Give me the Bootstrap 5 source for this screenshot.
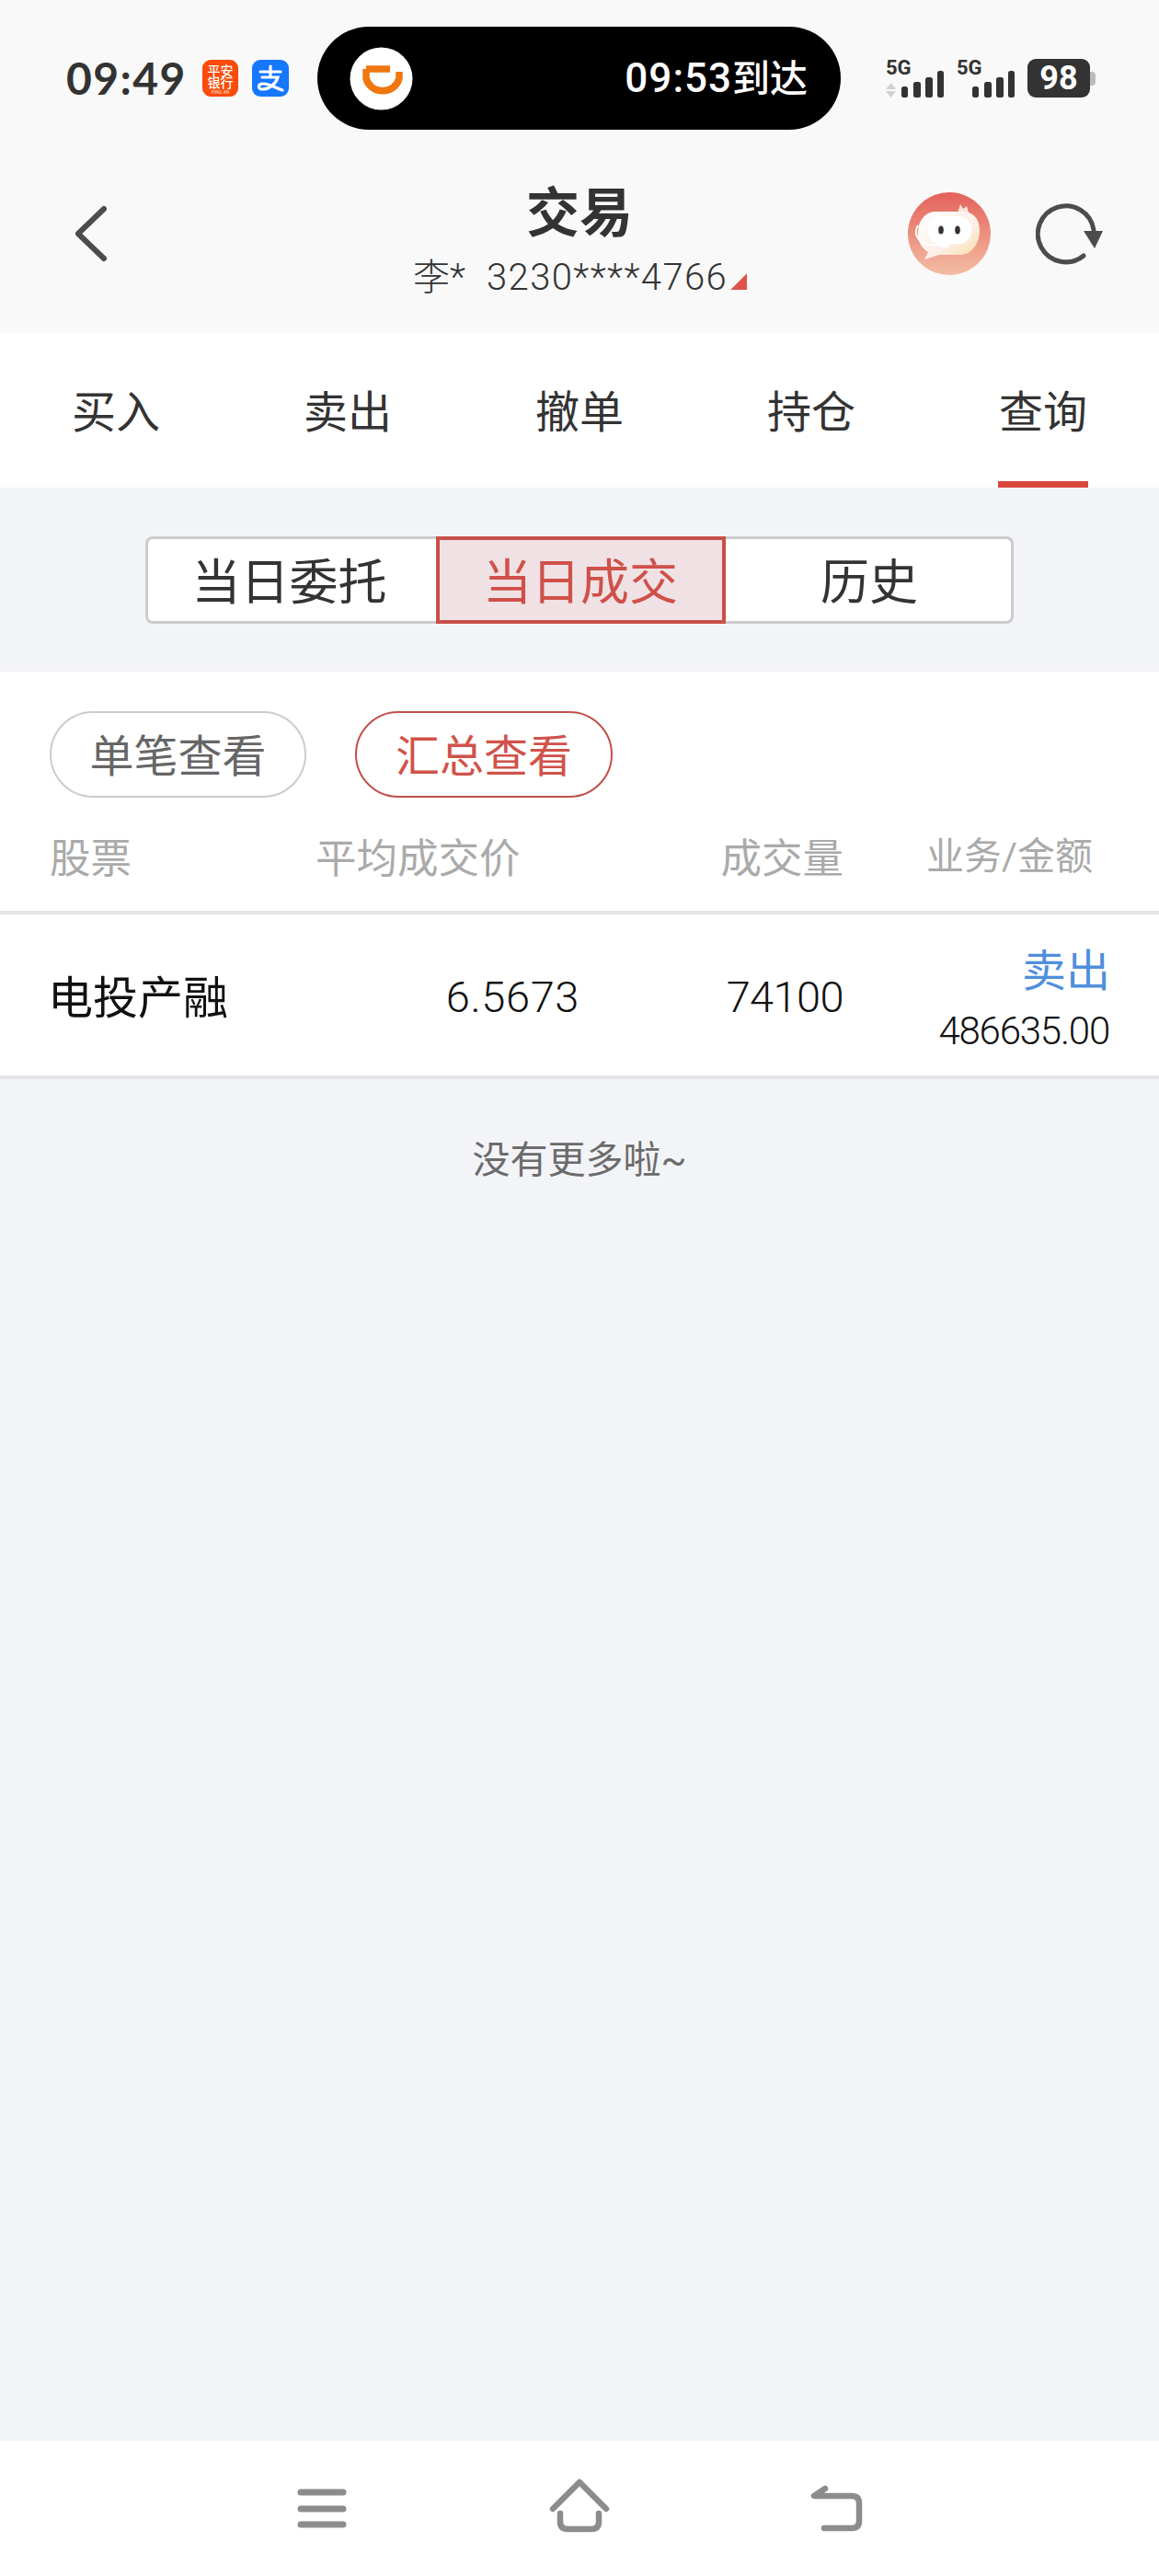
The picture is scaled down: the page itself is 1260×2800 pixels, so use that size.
<!DOCTYPE html>
<html lang="zh-CN">
<head>
    <meta charset="UTF-8">
    <meta name="viewport" content="width=device-width, initial-scale=1.0">
    <title>交易</title>
    <link href="https://cdn.jsdelivr.net/npm/bootstrap@5.3.0/dist/css/bootstrap.min.css" rel="stylesheet">
    <style>
        body {
            width: 1260px;
            height: 2800px;
            background: #f3f4f8;
            font-family: "Roboto", "Noto Sans CJK SC", sans-serif;
            color: #333;
        }

        .top-area { background: #f9f9f9; height: 362px; padding-top: 29px; }

        /* status bar */
        .status-row { height: 112px; padding-left: 72px; }
        .clock { width: 127px; margin-right: 21px; font: 700 48px/1 "Lato", sans-serif; color: #333; letter-spacing: 1.4px; white-space: nowrap; }
        .app-ping {
            width: 39px; height: 40px; margin-right: 15px; border-radius: 9px; background: #fa4b0a; color: #fff;
            font-size: 14px; line-height: 13px; font-weight: 500; text-align: center; padding-top: 6px; overflow: hidden;
        }
        .app-ping div { white-space: nowrap; }
        .app-ping .ping-en { font-size: 5px; line-height: 6px; font-weight: 400; opacity: .8; }
        .app-pay { margin-right: 31px; }
        .island {
            width: 569px; height: 112px; margin-right: 49px; background: #000; border-radius: 56px;
            padding: 0 36px 0 35px; color: #fff; font-size: 41px; font-weight: 500;
        }
        .island-time { font-size: 44px; letter-spacing: 1px; white-space: nowrap; }
        .island-cn { font-size: 41px; letter-spacing: 0; }
        .sig-icons { margin-right: 11px; }
        .battery {
            width: 68px; height: 42px; background: #333; border-radius: 9px; color: #fff;
            font-size: 36px; font-weight: 700; line-height: 42px; text-align: center;
        }
        .battery-tip { width: 6px; height: 15px; background: #bbb; border-radius: 0 4px 4px 0; }

        /* title bar */
        .title-row { display: grid; grid-template-columns: 445px 370px 445px; margin-top: 59px; }
        .side-slot { height: 108px; }
        .left-slot { padding-left: 81px; }
        .right-slot { padding-left: 172px; gap: 49px; }
        .page-title { font-size: 58px; line-height: 64px; font-weight: 700; text-align: center; color: #333; }
        .account-line { margin-top: 16px; margin-left: 4px; font-size: 40px; line-height: 44px; font-weight: 300; white-space: nowrap; }
        .account-num { letter-spacing: 1.4px; margin-left: 23px; }
        .corner-mark {
            display: inline-block; width: 18px; height: 18px; margin-left: 3px; background: #e0524a;
            clip-path: polygon(100% 0, 100% 100%, 0 100%);
        }

        /* tabs */
        .trade-tabs { background: #fff; height: 168px; }
        .trade-tabs .nav-link { padding: 0; height: 168px; color: #333; font-size: 48px; font-weight: 400; }
        .tab-label { display: inline-block; width: 98px; height: 168px; line-height: 174px; white-space: nowrap; }
        .tab-label.on { box-shadow: inset 0 -7px 0 #d9473f; }

        /* segmented */
        .segment-wrap { height: 200px; padding-top: 53px; }
        .seg-group { margin-right: 1px; }
        .seg-group .btn {
            width: 315px; height: 95px; padding: 7px 0 0; background: #fff; color: #333; font-size: 53px; line-height: 1;
            border: 3px solid #ccc; margin: 0 !important;
        }
        .seg-group .btn.seg-on { background: #f0e1e4; color: #d0504a; border: 4px solid #c8504a; border-radius: 0; z-index: 2; }
        .seg-group .seg-first { width: 316px; padding-right: 5px; border-right: 0; border-radius: 8px 0 0 8px; }
        .seg-group .seg-last { width: 313px; padding-left: 3px; border-left: 0; border-radius: 0 8px 8px 0; }

        /* list */
        .list-head { background: #fff; height: 260px; padding: 43px 0 0 54px; }
        .chip-row { gap: 53px; }
        .chip-btn {
            width: 279px; height: 94px; padding: 5px 0 0; background: #fff; color: #666; font-size: 48px; line-height: 1;
            border: 2px solid #ccc;
        }
        .chip-btn.chip-on { width: 280px; color: #d0524a; border-color: #c0504a; }
        .head-cols { display: grid; grid-template-columns: 289px 440px 134px 271px; margin-top: 47px; color: #aaa; font-size: 44.500px; line-height: 40px; white-space: nowrap; }
        .head-last { font-size: 41px; margin-top: -3px; text-align: right; }

        .row-line { height: 4px; background: #e4e4e8; }
        .deal-row {
            display: grid; grid-template-columns: 291px 285px 287px 287px; align-items: center;
            background: #fff; height: 175px; padding-left: 54px; color: #111; font-weight: 300;
        }
        .deal-name { font-size: 49px; font-weight: 400; margin: 9px 0 0 -2px; white-space: nowrap; }
        .deal-num { font-size: 47px; letter-spacing: -.6px; text-align: right; margin-top: 6px; }
        .deal-price { letter-spacing: .6px; }
        .deal-side { text-align: right; }
        .deal-type { color: #4f8fdc; font-size: 48px; line-height: 60px; font-weight: 400; margin: 9px -3px 0 0; }
        .deal-money { font-size: 42px; letter-spacing: -1.2px; line-height: 50px; margin: 10px -2px 0 0; }

        .no-more { flex: 1; padding-top: 63px; font-size: 41px; line-height: 50px; color: #6b6b6b; text-align: center; font-weight: 400; }

        .bottom-bar { background: #fff; height: 147px; }
        .bottom-bar svg { display: block; }
    </style>
</head>

<body class="d-flex flex-column">
    <div class="top-area">
        <div class="status-row d-flex align-items-center">
            <div class="clock">09:49</div>
            <div class="app-ping"><div>平安</div><div>银行</div><div class="ping-en">PING AN</div></div>
            <svg class="app-pay" width="40" height="40" viewBox="0 0 40 40">
                <rect width="40" height="40" rx="9" fill="#1677ff"/>
                <path d="M9 13H31M20 7V19M11 19H28C26 26 19 32 11 32C6 32 6 26 12 26C20 26 26 31 33 33" fill="none" stroke="#fff" stroke-width="3.2" stroke-linecap="round"/>
            </svg>
            <div class="island d-flex align-items-center justify-content-between">
                <svg width="69" height="69" viewBox="0 0 69 69">
                    <circle cx="34.500" cy="34.500" r="34" fill="#fff"/>
                    <path d="M18 24H44M18 24V34A18.500 18 0 0 0 54 34V27" fill="none" stroke="#f0760e" stroke-width="7.500"/>
                </svg>
                <div class="island-time">09:53<span class="island-cn">到达</span></div>
            </div>
            <svg class="sig-icons" width="143" height="50" viewBox="0 -4 143 50">
                <text x="0" y="17" font-family="Roboto" font-size="22" font-weight="700" fill="#333">5G</text>
                <path d="M5.500 26L11 33H0ZM5.500 42L0 35H11Z" fill="#d2d2d2"/>
                <g fill="#333">
                    <rect x="17" y="30" width="7" height="12" rx="2.500"/>
                    <rect x="30" y="25" width="8" height="17" rx="2.500"/>
                    <rect x="43" y="20" width="8" height="22" rx="2.500"/>
                    <rect x="56" y="13" width="7" height="29" rx="2.500"/>
                </g>
                <text x="77" y="17" font-family="Roboto" font-size="22" font-weight="700" fill="#333">5G</text>
                <g fill="#333">
                    <rect x="94" y="30" width="7" height="12" rx="2.500"/>
                    <rect x="107" y="25" width="8" height="17" rx="2.500"/>
                    <rect x="120" y="20" width="8" height="22" rx="2.500"/>
                    <rect x="133" y="13" width="7" height="29" rx="2.500"/>
                </g>
            </svg>
            <div class="battery">98</div>
            <div class="battery-tip"></div>
        </div>

        <div class="title-row">
            <div class="side-slot left-slot d-flex align-items-center">
                <svg width="36" height="64" viewBox="0 0 36 64">
                    <path d="M32 5L4 32L32 59" fill="none" stroke="#4c4c4c" stroke-width="6" stroke-linecap="round" stroke-linejoin="round"/>
                </svg>
            </div>
            <div>
                <div class="page-title">交易</div>
                <div class="account-line">李*<span class="account-num">3230****4766</span><span class="corner-mark"></span></div>
            </div>
            <div class="side-slot right-slot d-flex align-items-center">
                <svg width="90" height="90" viewBox="0 0 90 90">
                    <defs>
                        <linearGradient id="avatarBg" x1="0" y1="0" x2="0" y2="1">
                            <stop offset="0" stop-color="#e4615a"/>
                            <stop offset="1" stop-color="#f4bda4"/>
                        </linearGradient>
                        <linearGradient id="blobFill" x1="0" y1="0" x2="1" y2="1">
                            <stop offset="0" stop-color="#fff"/>
                            <stop offset=".6" stop-color="#fdeee6"/>
                            <stop offset="1" stop-color="#f8dca0"/>
                        </linearGradient>
                    </defs>
                    <circle cx="45" cy="45" r="45" fill="url(#avatarBg)"/>
                    <path d="M54 22L57 13L60 18L64 15L66 22Z" fill="#fbe6de"/>
                    <path d="M30 21H60C70 21 78 28 78 41C78 55 70 68 56 68H34L18 73L22 65C14 60 10 52 11 42C12 29 20 21 30 21Z" fill="url(#blobFill)"/>
                    <rect x="22" y="26" width="47" height="30" rx="14" fill="#fff"/>
                    <ellipse cx="36" cy="41" rx="2.800" ry="4.500" fill="#3a3230"/>
                    <ellipse cx="54" cy="41" rx="2.800" ry="4.500" fill="#3a3230"/>
                    <path d="M11 36C6 44 10 54 22 57H38" fill="none" stroke="#fff" stroke-width="2"/>
                    <rect x="34" y="54" width="11" height="6" rx="3" fill="#fff"/>
                </svg>
                <svg width="74" height="68" viewBox="0 0 74 68">
                    <path d="M52 58A30.500 30.500 0 1 1 63 30" fill="none" stroke="#4c4c4c" stroke-width="5" stroke-linecap="round"/>
                    <path d="M52 31H73L64 50Z" fill="#4c4c4c"/>
                </svg>
            </div>
        </div>
    </div>

    <ul class="nav nav-justified trade-tabs">
        <li class="nav-item"><a class="nav-link" href="#"><span class="tab-label">买入</span></a></li>
        <li class="nav-item"><a class="nav-link" href="#"><span class="tab-label">卖出</span></a></li>
        <li class="nav-item"><a class="nav-link" href="#"><span class="tab-label">撤单</span></a></li>
        <li class="nav-item"><a class="nav-link" href="#"><span class="tab-label">持仓</span></a></li>
        <li class="nav-item"><a class="nav-link" href="#"><span class="tab-label on">查询</span></a></li>
    </ul>

    <div class="segment-wrap d-flex justify-content-center align-items-start">
        <div class="btn-group seg-group" role="group">
            <button type="button" class="btn seg-first">当日委托</button>
            <button type="button" class="btn seg-on">当日成交</button>
            <button type="button" class="btn seg-last">历史</button>
        </div>
    </div>

    <div class="list-head">
        <div class="d-flex chip-row">
            <button type="button" class="btn rounded-pill chip-btn">单笔查看</button>
            <button type="button" class="btn rounded-pill chip-btn chip-on">汇总查看</button>
        </div>
        <div class="head-cols">
            <div>股票</div>
            <div>平均成交价</div>
            <div class="text-end">成交量</div>
            <div class="head-last">业务/金额</div>
        </div>
    </div>
    <div class="row-line"></div>
    <div class="deal-row">
        <div class="deal-name">电投产融</div>
        <div class="deal-num deal-price">6.5673</div>
        <div class="deal-num">74100</div>
        <div class="deal-side">
            <div class="deal-type">卖出</div>
            <div class="deal-money">486635.00</div>
        </div>
    </div>
    <div class="row-line"></div>

    <div class="no-more">没有更多啦~</div>

    <div class="bottom-bar d-flex">
        <svg width="1260" height="147" viewBox="0 0 1260 147">
            <g fill="none" stroke="#8c8c8c" stroke-width="7" stroke-linecap="round" stroke-linejoin="round">
                <path d="M327 56H373M327 74H373M327 91H373"/>
                <path d="M601 74L630 45L659 74M609 79V88Q609 96 617 96H643Q651 96 651 88V79" stroke-width="6.500"/>
                <path d="M897 52L885 60H926Q934 60 934 68V87Q934 95 926 95H896" stroke-width="6.500"/>
            </g>
        </svg>
    </div>
</body>

</html>
